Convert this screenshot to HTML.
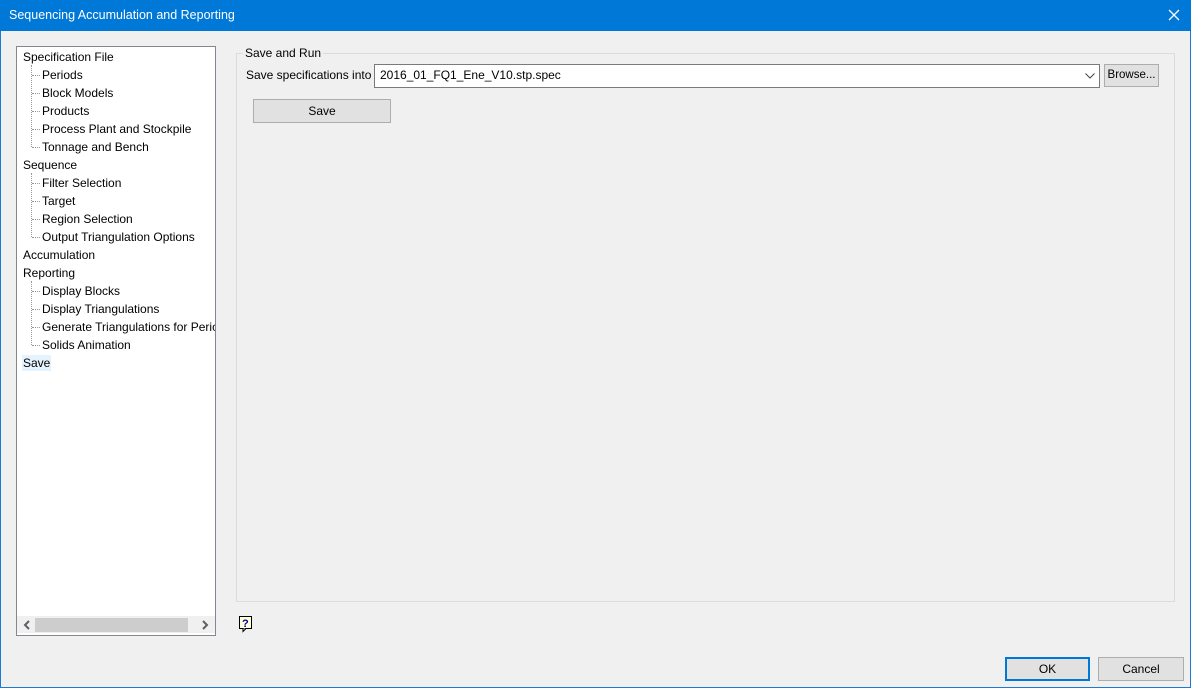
<html><head><style>
body{margin:0;width:1191px;height:688px;background:#f0f0f0;font-family:"Liberation Sans",sans-serif;font-size:12px;color:#000;position:relative;overflow:hidden}
.a{position:absolute}
.win{position:absolute;left:0;top:0;width:1189px;height:686px;border:1px solid #1a7ad4}
.title{left:0;top:0;width:1191px;height:31px;background:#0078d7;color:#fff;font-size:12.5px}
.tree{left:16px;top:46px;width:198px;height:588px;background:#fff;border:1px solid #828790}
.it{position:absolute;white-space:nowrap;line-height:16px}
.dl{position:absolute;border-left:1px dotted #999;width:0}
.dh{position:absolute;border-top:1px dotted #999;width:8px;height:0}
.btn{position:absolute;background:#e1e1e1;border:1px solid #adadad;text-align:center;box-sizing:border-box}
</style></head><body>
<div class="win"></div>
<div class="a title"><span class="a" style="left:9px;top:8px">Sequencing Accumulation and Reporting</span>
<svg class="a" style="left:1168px;top:9px" width="12" height="12"><path d="M1 1L11 11M11 1L1 11" stroke="#fff" stroke-width="1.3"/></svg></div>
<div class="a tree">
<div style="position:absolute;left:0;top:0;width:198px;height:588px;overflow:hidden">
<div class="it" style="left:6px;top:2px">Specification File</div>
<div class="dl" style="left:14px;top:18px;height:82px"></div>
<div class="dh" style="left:15px;top:28px"></div><div class="it" style="left:25px;top:20px">Periods</div>
<div class="dh" style="left:15px;top:46px"></div><div class="it" style="left:25px;top:38px">Block Models</div>
<div class="dh" style="left:15px;top:64px"></div><div class="it" style="left:25px;top:56px">Products</div>
<div class="dh" style="left:15px;top:82px"></div><div class="it" style="left:25px;top:74px">Process Plant and Stockpile</div>
<div class="dh" style="left:15px;top:100px"></div><div class="it" style="left:25px;top:92px">Tonnage and Bench</div>
<div class="it" style="left:6px;top:110px">Sequence</div>
<div class="dl" style="left:14px;top:126px;height:64px"></div>
<div class="dh" style="left:15px;top:136px"></div><div class="it" style="left:25px;top:128px">Filter Selection</div>
<div class="dh" style="left:15px;top:154px"></div><div class="it" style="left:25px;top:146px">Target</div>
<div class="dh" style="left:15px;top:172px"></div><div class="it" style="left:25px;top:164px">Region Selection</div>
<div class="dh" style="left:15px;top:190px"></div><div class="it" style="left:25px;top:182px">Output Triangulation Options</div>
<div class="it" style="left:6px;top:200px">Accumulation</div>
<div class="it" style="left:6px;top:218px">Reporting</div>
<div class="dl" style="left:14px;top:234px;height:64px"></div>
<div class="dh" style="left:15px;top:244px"></div><div class="it" style="left:25px;top:236px">Display Blocks</div>
<div class="dh" style="left:15px;top:262px"></div><div class="it" style="left:25px;top:254px">Display Triangulations</div>
<div class="dh" style="left:15px;top:280px"></div><div class="it" style="left:25px;top:272px">Generate Triangulations for Periods</div>
<div class="dh" style="left:15px;top:298px"></div><div class="it" style="left:25px;top:290px">Solids Animation</div>
<div class="it" style="left:5px;top:308px;background:#e5f3ff;padding:0 1px">Save</div>
<div class="a" style="left:0;top:569px;width:198px;height:17px;background:#f0f0f0"></div>
<div class="a" style="left:18px;top:571px;width:153px;height:14px;background:#cdcdcd"></div>
<svg class="a" style="left:6px;top:573px" width="8" height="10"><path d="M6 1L2 5L6 9" stroke="#606060" stroke-width="2" fill="none"/></svg>
<svg class="a" style="left:184px;top:573px" width="8" height="10"><path d="M2 1L6 5L2 9" stroke="#606060" stroke-width="2" fill="none"/></svg>
</div></div>
<div class="a" style="left:236px;top:53px;width:937px;height:547px;border:1px solid #dcdcdc"></div>
<div class="a" style="left:243px;top:46px;background:#f0f0f0;padding:0 2px">Save and Run</div>
<div class="a" style="left:246px;top:68px;font-size:12px">Save specifications into</div>
<div class="a" style="left:374px;top:64px;width:724px;height:22px;background:#fff;border:1px solid #7a7a7a"><span class="a" style="left:5px;top:3px">2016_01_FQ1_Ene_V10.stp.spec</span>
<svg class="a" style="left:710px;top:8px" width="10" height="6"><path d="M0.5 0.5L5 5L9.5 0.5" stroke="#444" fill="none"/></svg></div>
<div class="btn" style="left:1104px;top:64px;width:55px;height:23px;line-height:21px;font-size:11.5px">Browse...</div>
<div class="btn" style="left:253px;top:99px;width:138px;height:24px;line-height:22px">Save</div>
<svg class="a" style="left:238px;top:615px" width="16" height="18"><rect x="1.5" y="1.5" width="12" height="12" fill="#ffffe0" stroke="#000"/><path d="M5 13.5v3l3-3" fill="#ffffe0" stroke="#000"/><text x="4" y="12" font-size="11" font-weight="bold" fill="#00008b" font-family="Liberation Sans">?</text></svg>
<div class="btn" style="left:1005px;top:657px;width:85px;height:24px;line-height:22px;border:1px solid #0078d7;box-shadow:inset 0 0 0 1px #0078d7">OK</div>
<div class="btn" style="left:1098px;top:657px;width:86px;height:24px;line-height:22px">Cancel</div>
</body></html>
